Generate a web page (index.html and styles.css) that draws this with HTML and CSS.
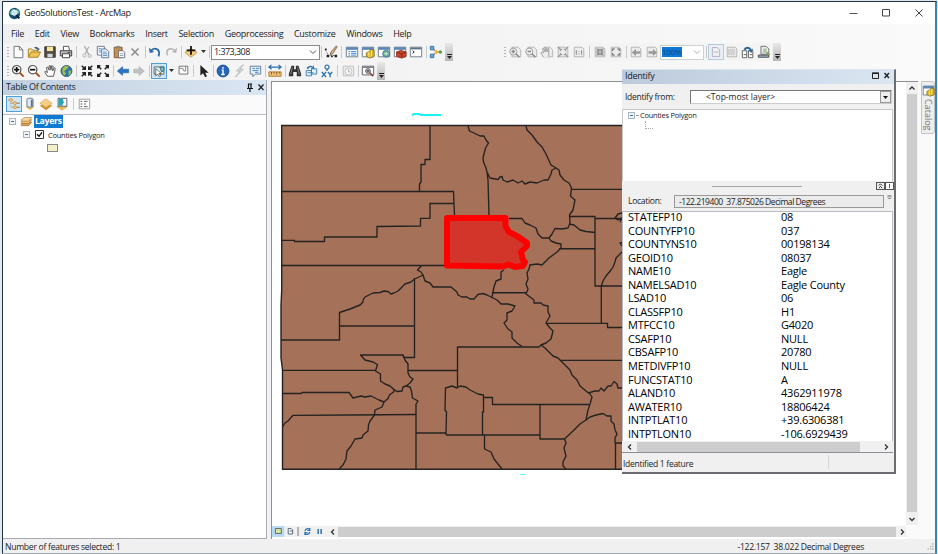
FILE: index.html
```html
<!DOCTYPE html>
<html lang="en">
<head>
<meta charset="utf-8">
<title>GeoSolutionsTest - ArcMap</title>
<link rel="stylesheet" href="styles.css">
</head>
<body>
<svg class="defs" width="0" height="0">
  <symbol id="zin" viewBox="0 0 16 16"><circle cx="6.5" cy="6.5" r="4.8" fill="#fff" stroke="#555" stroke-width="1.4"/><path d="M3.500 6.500h6M6.500 3.500v6" stroke="#111" stroke-width="2"/><path d="M10 10l4.500 4.500" stroke="#a0522d" stroke-width="2.200"/></symbol>
  <symbol id="zout" viewBox="0 0 16 16"><circle cx="6.500" cy="6.500" r="4.800" fill="#fff" stroke="#555" stroke-width="1.400"/><path d="M3.500 6.500h6" stroke="#111" stroke-width="2"/><path d="M10 10l4.500 4.500" stroke="#a0522d" stroke-width="2.200"/></symbol>
  <symbol id="hand" viewBox="0 0 16 16"><path d="M5 14L2 9l1-1 2 2-1-6 1.500-.5L7 7V2h1.500L9 7l1-5 1.500.5L11 8l2-4 1 1-2 9z" fill="#fff" stroke="#555" stroke-width="1.100"/></symbol>
  <symbol id="fin" viewBox="0 0 16 16"><path d="M2 2l4 4M6 2.500v3.500H2.500M14 2l-4 4M10 2.500v3.500h3.500M2 14l4-4M2.500 10h3.500v3.500M14 14l-4-4M13.500 10h-3.500v3.500" fill="none" stroke="#222" stroke-width="1.700"/></symbol>
  <symbol id="fout" viewBox="0 0 16 16"><path d="M6 6L2 2M2 5V2h3M10 6l4-4M11 2h3v3M6 10l-4 4M2 11v3h3M10 10l4 4M14 11v3h-3" fill="none" stroke="#222" stroke-width="1.700"/></symbol>
  <symbol id="pg" viewBox="0 0 16 16"><path d="M4.500 2.500h7l3 3v8h-10z" fill="#ececec" stroke="#b0b0b0"/></symbol>
  <symbol id="sheet" viewBox="0 0 16 16"><path d="M2.500 2.500h9l2 2v9h-11z" fill="#ececec" stroke="#b0b0b0"/></symbol>
  <symbol id="win" viewBox="0 0 16 16"><path d="M1.500 2.500h13v11h-13z" fill="#fff" stroke="#60717f"/><path d="M1.500 2.500h13v3h-13z" fill="#5b86b5"/></symbol>
  <symbol id="catalog" viewBox="0 0 16 16"><use href="#win"/><path d="M6 9l4-2 1-2 4 1v7l-5 2-4-2z" fill="#d9b320" stroke="#806410" stroke-width=".8"/><path d="M9 8v6M12 6v7" stroke="#fff3a0"/></symbol>
  <symbol id="stack" viewBox="0 0 16 16"><path d="M1 11l5-3h9l-4 5H1z" fill="#d79848" stroke="#9b6824" stroke-width=".7"/><path d="M1 8l5-3h9l-4 5H1z" fill="#efc079" stroke="#9b6824" stroke-width=".7"/><path d="M1 5l5-3h9l-4 5H1z" fill="#f6d79c" stroke="#9b6824" stroke-width=".7"/></symbol>
  <symbol id="dia" viewBox="0 0 16 16"><path d="M1 10l7-4 7 4-7 5z" fill="#d28f2c"/><path d="M1 7l7-5 7 5-7 5z" fill="#f4cf83" stroke="#d09a44" stroke-width=".6"/></symbol>
</svg>
<div class="window">
  <header class="titlebar">
    <svg class="app" viewBox="0 0 16 16"><circle cx="8" cy="8" r="7" fill="#174f73"/><path d="M2 6l4-4 3 1-1 4-3 3-3-1zM10 2l4 3v4l-3-2z" fill="#58b5a0"/><circle cx="8" cy="7" r="3.300" fill="#bfe8f2" stroke="#fff"/><path d="M10 10l4 4" stroke="#0e2538" stroke-width="2.500"/></svg>
    <span class="title">GeoSolutionsTest - ArcMap</span>
    <svg class="winbtns" viewBox="0 0 80 12"><path d="M1.500 6.500h8" stroke="#555"/><path d="M34.500 2.500h7v6.500h-7z" fill="none" stroke="#444"/><path d="M67.500 2.500l7 7M74.500 2.500l-7 7" stroke="#444"/></svg>
  </header>
  <nav class="menubar"><span>File</span><span>Edit</span><span>View</span><span>Bookmarks</span><span>Insert</span><span>Selection</span><span>Geoprocessing</span><span>Customize</span><span>Windows</span><span>Help</span></nav>

  <div class="toolrow">
    <div class="toolbar">
      <i class="grip"></i>
      <svg class="ic" viewBox="0 0 16 16"><path d="M3.500 1.500h6l4 4v9h-10z" fill="#fff" stroke="#667"/><path d="M9.500 1.500v4h4" fill="none" stroke="#667"/></svg>
      <svg class="ic" viewBox="0 0 16 16"><path d="M1.500 13.500v-9h4l1 1.500h6v3" fill="#f5dc8a" stroke="#a07a20"/><path d="M1.500 14l3-6h11l-3 6z" fill="#f0c552" stroke="#a07a20"/><path d="M8 3c2-2 4-1 5 1l1-1v3h-3l1-1" fill="#46627f"/></svg>
      <svg class="ic" viewBox="0 0 16 16"><path d="M2 2h12v12H2z" fill="#514c3d" stroke="#3a362b"/><path d="M4.500 2h7v5h-7z" fill="#f4e6a5"/><path d="M5 10h6v4H5z" fill="#d6d6d6"/></svg>
      <svg class="ic" viewBox="0 0 16 16"><path d="M5 6V1.500h6l1 4.500" fill="#fff" stroke="#444"/><path d="M1.500 6.500h13v6h-13z" fill="#b9b9b9" stroke="#333"/><path d="M4 10h8v4.500H4z" fill="#fff" stroke="#333"/><path d="M10 8.500h3" stroke="#333"/></svg>
      <i class="sep s5"></i>
      <svg class="ic" viewBox="0 0 16 16"><path d="M5 1l5 10M10 2L6 10" stroke="#aaa" stroke-width="1.300"/><circle cx="5" cy="12" r="1.800" fill="none" stroke="#aaa"/><circle cx="11" cy="12.500" r="1.800" fill="none" stroke="#aaa"/></svg>
      <svg class="ic" viewBox="0 0 16 16"><path d="M1.500 1.500h8v10h-8z" fill="#fff" stroke="#56718c"/><path d="M6.500 4.500h5l3 3v7h-8z" fill="#e9f2fb" stroke="#56718c"/><path d="M8 8h4M8 10h5M8 12h5M3 4h3M3 6h3M3 8h3" stroke="#5d8cbd"/></svg>
      <svg class="ic" viewBox="0 0 16 16"><path d="M2.500 2.500h9v12h-9z" fill="#c98f4b" stroke="#7a552a"/><path d="M5 1h4v3H5z" fill="#888"/><path d="M7.500 6.500h5l2 2v6h-7z" fill="#fff" stroke="#667"/><path d="M9 10h4M9 12h4" stroke="#89a"/></svg>
      <svg class="ic" viewBox="0 0 16 16"><path d="M4 4l8 8M12 4l-8 8" stroke="#8e8e8e" stroke-width="1.800"/></svg>
      <i class="sep s4"></i>
      <svg class="ic" viewBox="0 0 16 16"><path d="M3 7c4-5 12-3 9 6" fill="none" stroke="#2b6ca8" stroke-width="2"/><path d="M1 3l1 6 5-1z" fill="#2b6ca8"/></svg>
      <svg class="ic" viewBox="0 0 16 16"><path d="M13 7C9 2 1 4 4 12" fill="none" stroke="#b4b4b4" stroke-width="1.700"/><path d="M15 3l-1 6-5-1z" fill="#b4b4b4"/></svg>
      <i class="sep s4"></i>
      <svg class="ic" viewBox="0 0 16 16"><path d="M1 8.500L8 4l7 4.500L8 14z" fill="#f1cd80" stroke="#c39a4c"/><path d="M8 1v10M3 6h10" stroke="#111" stroke-width="2"/></svg>
      <i class="caret"></i><i class="sep s4"></i>
      <div class="combo scale"><span>1:373,308</span><svg viewBox="0 0 8 6"><path d="M1 1.500l3 3 3-3" fill="none" stroke="#555"/></svg></div>
      <i class="sep s3"></i>
      <svg class="ic" viewBox="0 0 16 16"><path d="M2 6l3 6h8" fill="none" stroke="#555" stroke-dasharray="1.500 1.500"/><path d="M14 1L8 8l-1 3 3-1 5-8z" fill="#e5b778" stroke="#543" stroke-width=".8"/><path d="M1 4h2v2H1zM3 11h3v3H3zM8 12h2v2H8zM12 11h3v3h-3z" fill="#222"/></svg>
      <i class="sep s5"></i>
      <svg class="ic" viewBox="0 0 16 16"><use href="#win"/><path d="M4 7.500h2M7 7.500h6M4 9.500h2M7 9.500h6M4 11.500h2M7 11.500h6" stroke="#2f78c4"/></svg>
      <svg class="ic" viewBox="0 0 16 16"><use href="#catalog"/></svg>
      <svg class="ic" viewBox="0 0 16 16"><use href="#win"/><circle cx="10.500" cy="10" r="4" fill="#65ac8f" stroke="#4679ae"/><path d="M8 10h5M10.500 8v4" stroke="#d7f5de"/></svg>
      <svg class="ic" viewBox="0 0 16 16"><use href="#win"/><path d="M4 8l5-2 6 2v5l-5 2-6-2z" fill="#c9442e" stroke="#812313" stroke-width=".8"/><path d="M4 8l6 2 5-2M10 10v4" fill="none" stroke="#812313"/></svg>
      <svg class="ic" viewBox="0 0 16 16"><path d="M1.500 2.500h13v11h-13z" fill="#fff" stroke="#60717f"/><path d="M2 3h12v2H2z" fill="#60717f"/><path d="M4 6.500l2 1.500-2 1.500" fill="none" stroke="#222"/></svg>
      <i class="sep s4"></i>
      <svg class="ic" viewBox="0 0 16 16"><path d="M4 3l4 5M4 13l4-5h5" fill="none" stroke="#555"/><path d="M1.500 1.500h4v4h-4zM1.500 10.500h4v4h-4z" fill="#65acd9" stroke="#2b6ca8"/><path d="M6 8l2.500-2.500L11 8l-2.500 2.500z" fill="#f0bd35"/><circle cx="13" cy="8" r="2" fill="#50a34e"/></svg>
      <i class="over"></i>
    </div>
    <div class="toolbar layout">
      <i class="grip"></i>
      <svg class="ic" viewBox="0 0 16 16"><use href="#pg"/><circle cx="6" cy="7.500" r="4" fill="#eee" stroke="#999"/><path d="M4 7.500h4M6 5.500v4M9 10l4 4" stroke="#888" stroke-width="1.700"/></svg>
      <svg class="ic" viewBox="0 0 16 16"><use href="#pg"/><circle cx="6" cy="7.500" r="4" fill="#eee" stroke="#999"/><path d="M4 7.500h4M9 10l4 4" stroke="#888" stroke-width="1.700"/></svg>
      <svg class="ic" viewBox="0 0 16 16"><use href="#pg"/><path d="M4 14L1 9l2-1 1 1-1-5h1l2 4V3h1l1 5 1-4h1v9" fill="#eee" stroke="#999"/></svg>
      <svg class="ic" viewBox="0 0 16 16"><use href="#sheet"/><path d="M5 7V5h2M9 5h2v2M5 9v2h2M9 11h2V9M2 2l3 3M14 2l-3 3M2 14l3-3M14 14l-3-3" fill="none" stroke="#999" stroke-width="1.300"/></svg>
      <svg class="ic" viewBox="0 0 16 16"><use href="#sheet"/><path d="M5 6v5M11 6v5M8 7v1M8 9.500v1" stroke="#999" stroke-width="1.400"/></svg>
      <i class="sep s5"></i>
      <svg class="ic" viewBox="0 0 16 16"><use href="#sheet"/><path d="M4 4l3 3M7 4v3H4M12 4L9 7M9 4v3h3M4 12l3-3M4 9h3v3M12 12L9 9M12 9H9v3" fill="none" stroke="#888" stroke-width="1.300"/></svg>
      <svg class="ic" viewBox="0 0 16 16"><use href="#sheet"/><path d="M4 7V4.500h2.500M9.500 4.500H12V7M4 9v2.500h2.500M9.500 11.500H12V9" fill="none" stroke="#888" stroke-width="1.700"/></svg>
      <i class="sep s4"></i>
      <svg class="ic" viewBox="0 0 16 16"><use href="#sheet"/><path d="M3 8.500l5-4v2.500h5v3H8v2.500z" fill="#999"/></svg>
      <svg class="ic" viewBox="0 0 16 16"><use href="#sheet"/><path d="M14 8.500l-5-4v2.500H4v3h5v2.500z" fill="#999"/></svg>
      <div class="combo pct"><span>100%</span><svg viewBox="0 0 8 6"><path d="M1 1.500l3 3 3-3" fill="none" stroke="#aaa"/></svg></div>
      <i class="sep s4"></i>
      <svg class="ic on soft" viewBox="0 0 16 16"><path d="M3.500 2.500h6l3 3v8h-9z" fill="#eef0f2" stroke="#aab"/><path d="M5 8h6" stroke="#aab"/></svg>
      <svg class="ic" viewBox="0 0 16 16"><use href="#sheet"/><path d="M4 5h7v6H4z" fill="#d5d5d5" stroke="#bbb" stroke-dasharray="1 1"/></svg>
      <svg class="ic" viewBox="0 0 16 16"><path d="M1.500 6.500h5v8h-5zM8.500 6.500h5v8h-5z" fill="#fff" stroke="#555"/><path d="M3 5c1-4 8-4 9 0l2-1-2 5-4-3h2c-1-2-4-2-5 0z" fill="#336f9d"/><path d="M3 11h3M10 11h3" stroke="#555"/></svg>
      <svg class="ic" viewBox="0 0 16 16"><path d="M4.500 1.500h6l3 3v6h-9z" fill="#e9efe7" stroke="#666"/><path d="M7 4h4v5H7z" fill="#b3c3a6"/><path d="M1.500 11.500h12v2.500h-12z" fill="#9fb3c6" stroke="#444"/><path d="M11 7l4 4-4 1z" fill="#789957"/></svg>
      <i class="over"></i>
    </div>
  </div>

  <div class="toolrow second">
    <div class="toolbar">
      <i class="grip"></i>
      <svg class="ic"><use href="#zin"/></svg>
      <svg class="ic"><use href="#zout"/></svg>
      <svg class="ic"><use href="#hand"/></svg>
      <svg class="ic" viewBox="0 0 16 16"><circle cx="8.500" cy="8" r="6.300" fill="#2d76ae" stroke="#36536b"/><path d="M4 5c2-3 5-3 7-2l-2 3-3 2 2 3-2 2c-2-2-3-4-2-8zM11 7l3 1-1 4-2 1z" fill="#9fc04b"/></svg>
      <i class="sep s5"></i>
      <svg class="ic"><use href="#fin"/></svg>
      <svg class="ic"><use href="#fout"/></svg>
      <i class="sep s4"></i>
      <svg class="ic" viewBox="0 0 16 16"><path d="M1.500 8l6-5v3h7v4h-7v3z" fill="#2c73c4" stroke="#2260a5" stroke-width=".7"/></svg>
      <svg class="ic" viewBox="0 0 16 16"><path d="M14 8L8 3v3H2v4h6v3z" fill="#c1c1c1" stroke="#aaa" stroke-width=".7"/></svg>
      <i class="sep s4"></i>
      <svg class="ic on" viewBox="0 0 16 16"><path d="M2 3h12v9H2z" fill="#d9f4f5" stroke="#555"/><path d="M9 3h5v5l-3 1z" fill="#5fc5d8" stroke="#456"/><path d="M4 5v9l2.500-2 2 3 1.500-1-2-3h3z" fill="#fff" stroke="#333" stroke-width=".8"/></svg>
      <i class="caret"></i>
      <svg class="ic" viewBox="0 0 16 16"><path d="M3.500 2.500h10v9h-10z" fill="#fff" stroke="#666"/><path d="M4 5h4l1 3h2V3" fill="none" stroke="#777"/></svg>
      <i class="sep s4"></i>
      <svg class="ic" viewBox="0 0 16 16"><path d="M5 1v12l3-2.500L10.500 15l2-1-2-4h4z" fill="#222"/></svg>
      <i class="sep s4"></i>
      <svg class="ic" viewBox="0 0 16 16"><circle cx="8" cy="8" r="6.800" fill="#2465b9" stroke="#184c8e"/><path d="M8 3.500v2M6.500 7H8v5M6 12h4" stroke="#fff" stroke-width="1.600" fill="none"/></svg>
      <svg class="ic" viewBox="0 0 16 16"><path d="M12 1L5 8h4l-5 7 9-9H9l4-5z" fill="#ddd" stroke="#aaa" stroke-width=".8"/></svg>
      <svg class="ic" viewBox="0 0 16 16"><path d="M2.500 2.500h12v9h-6l-3 3v-3h-3z" fill="#e6f2fb" stroke="#58738d"/><path d="M5 5h3M9 5h4M5 7.500h7M8 9.500h4" stroke="#347dbd"/></svg>
      <i class="sep s4"></i>
      <svg class="ic" viewBox="0 0 16 16"><path d="M1 3.500h14M4 1L1 3.500 4 6M12 1l3 2.500L12 6" stroke="#246ca9" stroke-width="1.300" fill="none"/><path d="M1 9h14v5H1z" fill="#efbf76" stroke="#a9762e"/><path d="M4 9v3M7 9v2M10 9v3M13 9v2" stroke="#875a1e"/></svg>
      <i class="sep s4"></i>
      <svg class="ic" viewBox="0 0 16 16"><path d="M4 2h3v4h2V2h3l3 9v3h-5V9H6v5H1v-3z" fill="#333"/><path d="M5 4l-2 8M11 4l2 8" stroke="#888"/></svg>
      <svg class="ic" viewBox="0 0 16 16"><path d="M2.500 7.500h6v6h-6zM8.500 5.500h6v6h-6z" fill="#e5f1fa" stroke="#3177ad"/><path d="M3 5c1-3 5-4 7-2l1-2 1 5-4-1 1-1C7 3 5 4 5 6z" fill="#3177ad"/><path d="M4 10h7" stroke="#3177ad"/></svg>
      <svg class="ic" viewBox="0 0 16 16"><circle cx="8" cy="3.500" r="2.300" fill="#fff" stroke="#3177ad" stroke-width="1.400"/><path d="M8 6v2M2 9l5 6M7 9l-5 6M9 9l2.500 3L14 9M11.500 12v3" stroke="#2470ae" stroke-width="1.500" fill="none"/></svg>
      <i class="sep s5"></i>
      <svg class="ic" viewBox="0 0 16 16"><path d="M2.500 2.500h12v11h-12z" fill="#eee" stroke="#bbb"/><circle cx="8.500" cy="8.500" r="4" fill="#f7f7f7" stroke="#bbb"/><path d="M8.500 6v3h2" fill="none" stroke="#aaa"/></svg>
      <i class="sep s4"></i>
      <svg class="ic" viewBox="0 0 16 16"><path d="M1.500 2.500h13v10h-13z" fill="#fff" stroke="#556"/><path d="M2 3h12v1.500H2z" fill="#778"/><circle cx="8" cy="8" r="2.700" fill="#ddd" stroke="#444"/><path d="M6.500 8h3M8 6.500v3" stroke="#333"/><path d="M10 10l4 4" stroke="#8b3a2a" stroke-width="1.700"/></svg>
      <i class="over"></i>
    </div>
  </div>

  <main class="work">
    <aside class="toc">
      <div class="toc-head"><span>Table Of Contents</span>
        <svg viewBox="0 0 20 9"><path d="M3 1h4M3.500 1v4M6 1v4M2 5.500h6M5 5.500V9" stroke="#111" stroke-width="1.200"/><path d="M13.500 1.500l5 5.500M18.500 1.500l-5 5.500" stroke="#222" stroke-width="1.300"/></svg></div>
      <div class="toc-tools">
        <svg class="ic on" viewBox="0 0 16 16"><path d="M4 5v7h4M4 7h4" fill="none" stroke="#888" stroke-dasharray="1 1"/><path d="M1 3l3-2 3 2-3 2zM6 7l3-2 3 2-3 2zM6 12l3-2 3 2-3 2z" fill="#f1c889" stroke="#c08e42"/><path d="M12 7h3M12 12h3" stroke="#555"/></svg>
        <svg class="ic" viewBox="0 0 16 16"><path d="M3 11l5 4 5-4-5-3z" fill="#efbd55"/><path d="M4.500 2.500c0-1.500 7-1.500 7 0v8c0 1.500-7 1.500-7 0z" fill="#dfe9f3" stroke="#59728e"/><path d="M10 3v8" stroke="#59728e" stroke-width="2"/></svg>
        <svg class="ic"><use href="#dia"/></svg>
        <svg class="ic" viewBox="0 0 16 16"><path d="M2 11l6-3 6 3-6 4z" fill="#efbd55" stroke="#c6943c" stroke-width=".6"/><path d="M3.500 1.500h10v9h-10z" fill="#fff" stroke="#556"/><path d="M4 2h5l1 4-2 4H4z" fill="#2aa4b8"/></svg>
        <i class="sep s4"></i>
        <svg class="ic" viewBox="0 0 16 16"><path d="M2.500 2.500h12v11h-12z" fill="#fafafa" stroke="#999"/><path d="M4 5h2M8 5h4M4 8h2M8 8h2M4 11h2M8 11h4" stroke="#555"/></svg>
      </div>
      <div class="toc-tree">
        <div class="node"><i class="exp"></i><svg class="lay"><use href="#stack"/></svg><b>Layers</b></div>
        <div class="node child"><i class="exp"></i><svg class="chk" viewBox="0 0 9 9"><path d="M.5.500h8v8h-8z" fill="#fff" stroke="#333"/><path d="M2 4.300l2 2 3-4" fill="none" stroke="#111" stroke-width="1.400"/></svg><span>Counties Polygon</span></div>
        <i class="patch"></i>
      </div>
    </aside>

    <section class="view">
      <div class="canvas">
        <svg class="map" viewBox="272 82 633 443">
          <path d="M412 115.500l2-1.500 5 0 2 1h20" fill="none" stroke="#19f1f5" stroke-width="2"/>
          <path d="M519.500 474.500h6" stroke="#6ff" stroke-width="1"/>
          <path class="land" d="M281.700 125.500H640V469.300H282.500V370L281 358V305L281.700 290z"/>
          <g class="lines">
            <path d="M430 125.500V159.500H425V164.500H421V182L419.500 184V191.500M281.700 191.500H453.500L454.500 216M281.700 240.300H294.500V241.500H324.500V237H377V226.500L420.500 226V218.300H430V203.500H454M281.700 265.500H446"/>
            <path d="M421.500 265.500L417.500 270 421 272 423 275 419 277 414.500 279 411 282 405 284 402 287 398 291 394 293 391 294 388 291.500 384 291 380 292.500 373 293 365 297 363 300 363 302 360 305 350 309 339.500 312.500V340H281M339.500 326H414.500M414.500 278V357.500H404L403 355H360.500L365 360 373 362 377.500 364.500 375.500 371 380.500 374V381L385 384 390 386 394 389.500 394 391.500 389.500 395 388 398.500 384 402 382 407 375 410 374.500 415 370 421 368.500 425 368 431 363 435 362 438 355 439 351 446 347 451 346 459 343 465 339 469"/>
            <path d="M423 275L425 281 430 283 433 287H451L457 292 458 295 462 297 467 297 470 299 474 299 478 294.500 483 293.500 487 295 491 297 497 300 501 304 508 304 515 306 512 311 507 313 507 320 504 323 508 329 512 332 512 338 517 343 522 346.500"/>
            <path d="M282.500 370.300H376M282.500 393.500H301L302 392.500H349L353 398 361 396 365 397 371 396 379 400 384 402M282.500 427L285 423 288 421 293 415.300 350 415 416 414.500"/>
            <path d="M403 355L405 360 408 364V373L410 377 413 379 410 383 406 386 403 387 402 391 397 391.500 393 389M406 386L410 387 411.500 391 412.500 398 418 401 416 404V469M408 370.500H457.500M416 433H446"/>
            <path d="M468 126L469.500 131 474 133 480 136 484 136 486 140 488.500 143 485.500 148 483 158 483.500 162 486 168 487 172 490 178 498 179.500 500 177 502 176.500 503 180 507 182 513 180 518 183 522 181 525 184 530 182 537 183 544 180 548 180 551 174 552 170 556 168 559 170 560 175 564 180 569 183 571.500 188 570.500 196 575 200 573 210 569.500 215 570 223 568 228 561 229 555 228.500 552 234 549 238M487 172L488 180 489 215"/>
            <path d="M526 126L527 130 532 135 537 142 542 147 546 154 551 165 556 168M571.500 189.300H640M569.500 216.500H595V286H640M595 218.500H640M569 224L574 225 580 230 586 231.500 595 232.500M559 248.700H595"/>
            <path d="M509 218.500H522L525 223 530 225 536 228 538 234 542 238 549 238 551 241 556 243 561 244 561 248 557 252 549 258 542 265 537 264 530 265 529 269 527 273 528 279 526 284 528 289 526 294 530 297 534 300 534 303 541 303 543 305 548 306 548 312 550 316 547 321 546 323 550 328 553 331 551 339 546 343 541 345 539 347H457.500V387M504 270L501 272 501 279 496 281 494 287 492 297M492 292.700H526"/>
            <path d="M541 345L545 348 553 356 558 358 561 361 566 366 570 370 572 375 577 380 580 386 586 391 590 394 592 397 590 404 588 410 586 420 580 424 573 431 564.500 439 566 443 564 448 566 456 563 462 563 466 566 469M560 360.300H640M588 393L595 391 599 391 601 388 604 391 608 386 611 386 614 381.500 617 384 618 388H640M546 323.300H607.500V327.500H640M601.300 286V323.300M601.300 286L603 281 606 276 611 270 613 267 615 262 616 258 620 254 624 250"/>
            <path d="M586 420L590 417 596 415 603 413.500 607 416 611 416 611 421 614 424 615 430 617 434 615 438 615 443H640M615.500 443V469M446 435L446.500 412 445 410 445.500 388 452 386 457 388 460 386 466 387 470 390 478 394 483.500 395V412H482.500V435M483.500 397.500H492.500V404.500H589M446 435H540M540 404.500V439H564.500M484.500 435V449L491 452 494 459 502 469M622 213l-4 1-3 4 3 2 4-2-2 4M624 242l-4 1 2 3"/>
          </g>
          <path class="picked" d="M447 218H505.500L505.500 226 509 232 517 236 527 243 527 246 521 252 523 260 525 262 523 266 515 267 508.500 264.500 503 266.500 447 265.500z"/>
        </svg>
        <div class="hbar">
          <svg class="viewbtns" viewBox="0 0 58 11"><path d="M0 0h12.500v11H0z" fill="#b5d9f3"/><path d="M3.500 2.500h6v5h-6z" fill="#d6e9a0" stroke="#666"/><path d="M16.500 2.500h3l1.500 1.500v4h-4.500zM18 5h2.500" fill="#fff" stroke="#567"/><path d="M26.500 1v9" stroke="#777"/><path d="M33.500 5c1-3 4-3 5-1M38.500 2v2.500H36M38.500 6c-1 3-4 3-5 1M33.500 9V6.500H36" fill="none" stroke="#286fb1" stroke-width="1.200"/><path d="M47 3v5M50 3v5" stroke="#286fb1" stroke-width="1.500"/></svg>
          <svg class="arr" viewBox="0 0 8 8"><path d="M5 1.500L2.500 4l2.500 2.500" fill="none" stroke="#333" stroke-width="1.300"/></svg>
          <i class="thumb"></i>
          <svg class="arr" viewBox="0 0 8 8"><path d="M3 1.500L5.500 4 3 6.500" fill="none" stroke="#333" stroke-width="1.300"/></svg>
        </div>
      </div>
      <div class="vbar">
        <svg class="arr" viewBox="0 0 8 8"><path d="M1.500 5.500L4 3l2.500 2.500" fill="none" stroke="#333" stroke-width="1.300"/></svg>
        <i class="thumb"></i>
        <svg class="arr" viewBox="0 0 8 8"><path d="M1.500 3L4 5.500 6.500 3" fill="none" stroke="#333" stroke-width="1.300"/></svg>
      </div>
    </section>
    <div class="dock"><div class="tab"><svg><use href="#catalog"/></svg><span>Catalog</span></div></div>
  </main>

  <footer class="status"><span class="sel">Number of features selected: 1</span><span class="coord">-122.157&nbsp; 38.022 Decimal Degrees</span>
    <svg viewBox="0 0 8 8"><path d="M6 1h1.500M4 3.500h1.500M6 3.500h1.500M1.500 6h1.500M4 6h1.500M6 6h1.500" stroke="#bbb" stroke-width="1.500"/></svg></footer>

  <section class="identify">
    <div class="id-head"><span>Identify</span><svg viewBox="0 0 24 10"><path d="M2.500 2h6v5.500h-6z" fill="none" stroke="#222"/><path d="M2 2.300h7" stroke="#222" stroke-width="1.400"/><path d="M14.500 2l4.500 5M19 2l-4.500 5" stroke="#222" stroke-width="1.400"/></svg></div>
    <div class="id-from"><label>Identify from:</label><div class="select"><span>&lt;Top-most layer&gt;</span><i class="drop"></i></div></div>
    <div class="id-tree"><div class="node"><i class="exp"></i><i class="dash"></i><span>Counties Polygon</span></div><i class="branch"></i></div>
    <div class="split"><i class="bar"></i><i class="mini"><svg viewBox="0 0 7 7"><path d="M1.500 3l2-2 2 2M1.500 6l2-2 2 2" fill="none" stroke="#111"/></svg></i><i class="mini lite"><svg viewBox="0 0 7 7"><path d="M3.500 1v5" stroke="#444"/></svg></i></div>
    <div class="id-loc"><label>Location:</label><div class="field">-122.219400&nbsp; 37.875026 Decimal Degrees</div><svg viewBox="0 0 5 5"><path d="M.5 1h4M1 2.500l1.500 1.500L4 2.500" fill="none" stroke="#555"/></svg></div>
    <dl class="attrs">
      <dt>STATEFP10</dt><dd>08</dd><dt>COUNTYFP10</dt><dd>037</dd><dt>COUNTYNS10</dt><dd>00198134</dd><dt>GEOID10</dt><dd>08037</dd><dt>NAME10</dt><dd>Eagle</dd><dt>NAMELSAD10</dt><dd>Eagle County</dd><dt>LSAD10</dt><dd>06</dd><dt>CLASSFP10</dt><dd>H1</dd><dt>MTFCC10</dt><dd>G4020</dd><dt>CSAFP10</dt><dd>NULL</dd><dt>CBSAFP10</dt><dd>20780</dd><dt>METDIVFP10</dt><dd>NULL</dd><dt>FUNCSTAT10</dt><dd>A</dd><dt>ALAND10</dt><dd>4362911978</dd><dt>AWATER10</dt><dd>18806424</dd><dt>INTPTLAT10</dt><dd>+39.6306381</dd><dt>INTPTLON10</dt><dd>-106.6929439</dd>
    </dl>
    <div class="id-scroll"><svg class="arr" viewBox="0 0 8 8"><path d="M5 1.500L2.500 4 5 6.500" fill="none" stroke="#333" stroke-width="1.300"/></svg><i class="thumb"></i><svg class="arr" viewBox="0 0 8 8"><path d="M3 1.500L5.500 4 3 6.500" fill="none" stroke="#333" stroke-width="1.300"/></svg></div>
    <div class="id-status"><span>Identified 1 feature</span></div>
  </section>
</div>
</body>
</html>
```
FILE: styles.css
```css
* { box-sizing: border-box; }
html, body { margin: 0; height: 100%; overflow: hidden; }
body { background: #e4e8eb; color: #222; font: 9px/12px "Open Sans", "Noto Sans", sans-serif; letter-spacing: -.28px; padding: 1px 1px 0 2px; }
.defs { position: absolute; }
svg, i { display: block; flex: none; }
span, label { white-space: nowrap; }
.window { position: relative; height: 553px; width: 935px; border: solid #1c3447; border-width: 1px 2px 1px 1px; border-right-color: #3d82b4; border-bottom-color: #a6abb0; background: linear-gradient(90deg, #f0f0f0, #f4f4f4 50%, #fafafa); display: flex; flex-direction: column; }

.titlebar { height: 22px; background: #fff; display: flex; align-items: center; padding: 0 7px 0 5px; }
.app { width: 13px; height: 13px; margin-right: 3px; }
.title { letter-spacing: -.35px; font-size: 9.200px; }
.winbtns { width: 80px; height: 12px; margin-left: auto; }
.menubar { height: 19px; display: flex; align-items: center; padding-left: 8px; gap: 10.700px; }

.toolrow { display: flex; height: 18px; gap: 47px; }
.second { margin: 1px 0 0; }
.toolbar { display: flex; align-items: center; height: 18px; background: #f4f4f4; }
.ic { width: 16px; height: 16px; padding: 1px; }
.ic.on { background: #cfe6f7; border: 1px solid #4f9fdc; padding: .5px; }
.ic.soft { background: #e9eff4; border-color: #b9cbd9; }
.grip { width: 2px; height: 11px; margin: 0 1px 0 4px; background: repeating-linear-gradient(#b5b5b5 0 1px, transparent 1px 3px); }
.sep { height: 12px; background: linear-gradient(#c9c9c9, #c9c9c9) center / 1px 100% no-repeat; }
.s3 { width: 3px; } .s4 { width: 4px; } .s5 { width: 5px; }
.caret { width: 8px; height: 4px; background: #333; clip-path: polygon(2px 0, 7px 0, 4.500px 3px); }
.over { width: 8px; height: 18px; margin-left: 1px; background: linear-gradient(#e8e8e8, #b5b5b5); display: flex; }
.over::after { content: ""; width: 5px; height: 5px; margin: 11px 0 0 2px; background: linear-gradient(#222 0 1px, transparent 1px 2px, #222 2px); clip-path: polygon(0 0, 5px 0, 5px 2px, 2.500px 5px, 0 2px); }
.combo { display: flex; align-items: center; justify-content: space-between; height: 15px; background: #fff; border: 1px solid #8a8a8a; padding: 0 2px; color: #222; }
.combo svg { width: 8px; height: 6px; }
.scale { width: 109px; }
.scale span { letter-spacing: -.55px; }
.pct { width: 44px; border-color: #d0d0d0; padding: 0 2px 0 1px; }
.pct span { background: #0f78d6; color: #114a80; width: 20px; line-height: 10px; font-size: 8px; letter-spacing: -.3px; }

.work { flex: none; height: 459px; display: flex; }
.toc { width: 264px; display: flex; flex-direction: column; border-right: 1px solid #a9aab4; border-bottom: 1px solid #a9aab4; }
.toc-head { height: 15px; background: linear-gradient(90deg, #c0d0e0, #dbe6f3); display: flex; align-items: center; justify-content: space-between; padding: 0 1px 1px 3px; letter-spacing: -.35px; }
.toc-head span { font-size: 9px; }
.toc-head svg { width: 20px; height: 9px; }
.toc-tools { height: 19px; display: flex; align-items: center; padding: 0 0 1px 3px; background: #fafafa; }
.toc-tools .sep { margin: 0 1px; }
.toc-tree { flex: 1; background: #fff; border-top: 1px solid #b9bcc4; padding: 0 0 0 6px; }
.node { display: flex; align-items: center; height: 13px; font-size: 7.500px; letter-spacing: -.25px; }
.exp { width: 7px; height: 7px; border: 1px solid #a9b4c2; background: linear-gradient(#4e70a0, #4e70a0) center / 3px 1px no-repeat #f1f4f8; }
.lay { width: 13px; height: 12px; margin: 0 1px 0 4px; }
.node b { background: #1079d2; color: #fff; font-size: 8.800px; line-height: 13px; padding: 0 1px; letter-spacing: -.35px; }
.child { padding-left: 14px; }
.chk { width: 9px; height: 9px; margin: 0 4px 0 5px; }
.patch { width: 11px; height: 8px; margin: 3px 0 0 38px; background: #f3efc8; border: 1px solid #888; }

.view { display: flex; width: 651px; margin-left: 4px; padding-top: 1px; }
.canvas { width: 635px; border: 1px solid #8d8f90; border-width: 1px 0 0 1px; background: #fff; display: flex; flex-direction: column; }
.map { width: 633px; height: 443px; }
.land { fill: #a57158; stroke: #252321; stroke-width: 1.400; }
.lines { fill: none; stroke: #252321; stroke-width: 1.350; stroke-linejoin: round; }
.picked { fill: #d2362a; stroke: #f00; stroke-width: 6; stroke-linejoin: round; }
.hbar { display: flex; height: 11px; align-items: center; background: #f0f0f0; margin-top: 1px; }
.viewbtns { width: 57px; height: 11px; }
.arr { width: 8px; height: 8px; }
.hbar .thumb { flex: 1; height: 10px; background: #cdcdcd; margin: 0 2px 0 1px; }
.vbar { width: 12px; height: 444px; margin-left: 0; border-top: 1px solid #8d8f90; background: #f0f0f0; display: flex; flex-direction: column; align-items: center; padding: 2px 0 2px; }
.vbar .thumb { flex: 1; width: 10px; background: #cdcdcd; margin: 2px 0 3px; }
.dock { padding-top: 1px; }
.tab { width: 14px; height: 53px; border: 1px solid #c3c3c3; border-radius: 0 3px 3px 0; background: #eee; display: flex; flex-direction: column; align-items: center; padding-top: 2px; gap: 2px; color: #777; }
.tab svg { width: 13px; height: 13px; }
.tab span { writing-mode: vertical-rl; letter-spacing: 0; line-height: 12px; }

.status { flex: 1; display: flex; align-items: center; background: #f0f0f0; padding: 2px 1px 0 2px; font-size: 8.600px; }
.coord { margin-left: auto; }
.status svg { width: 8px; height: 8px; margin-left: 62px; }

.identify { position: absolute; left: 619px; top: 67px; width: 274px; height: 405px; background: #f0f0f0; border: solid #6c6d70; border-width: 1px 2px 2px 0; border-top-color: #dce4ec; font-size: 8.500px; display: flex; flex-direction: column; }
.id-head { height: 14px; background: linear-gradient(90deg, #bccadb, #dbe6f2); display: flex; align-items: center; justify-content: space-between; padding: 0 0 2px 3px; font-size: 9px; }
.id-head svg { width: 24px; height: 10px; }
.id-from { height: 25px; display: flex; align-items: center; padding: 1px 2px 0 3px; }
.id-from label { width: 65px; padding-bottom: 1px; }
.select { flex: 1; height: 14px; background: #fff; border: 1px solid #777; border-right-color: #ccc; border-bottom-color: #ccc; display: flex; align-items: center; padding-left: 15px; letter-spacing: 0; }
.drop { width: 11px; height: 12px; margin-left: auto; border: 1px solid #999; background: #eee; display: flex; }
.drop::after { content: ""; width: 5px; height: 3px; margin: 4px 2px; background: #111; clip-path: polygon(0 0, 100% 0, 50% 100%); }
.id-tree { height: 72px; background: #fff; border: 1px solid #c9c9c9; border-bottom: 0; margin-right: 1px; padding-left: 5px; }
.id-tree .node { height: 10px; }
.dash { width: 3px; height: 1px; background: #999; margin: 0 1px 0 1px; }
.branch { width: 8px; height: 8px; margin: 1px 0 0 17px; border: dotted #aaa; border-width: 0 0 1px 1px; }
.split { height: 10px; display: flex; align-items: center; padding-left: 90px; }
.bar { width: 90px; height: 1px; background: #a6a6a6; margin-right: 74px; }
.mini { width: 9px; height: 8px; border: 1px solid #555; }
.mini svg { width: 7px; height: 6px; }
.lite { background: #fff; }
.id-loc { height: 20px; display: flex; align-items: center; padding: 0 0 0 6px; }
.id-loc label { width: 46px; }
.field { width: 210px; height: 13px; line-height: 11px; border: 1px solid #999; background: #ebebeb; padding-left: 4px; white-space: nowrap; letter-spacing: -.45px; }
.id-loc svg { width: 5px; height: 5px; margin: -7px 0 0 3px; }
.attrs { margin: 0 1px 0 0; height: 230px; background: #fff; border: 1px solid #b9bcc4; border-bottom: 0; padding-left: 5px; display: grid; grid-template-columns: 153px 1fr; grid-auto-rows: 13.560px; align-content: start; font-size: 11px; line-height: 12px; letter-spacing: -.22px; color: #000; }
.attrs dt, .attrs dd { margin: -1px 0 0; white-space: nowrap; }
.id-scroll { height: 12px; display: flex; align-items: center; padding: 0 3px 0 4px; border-bottom: 1px solid #8a8d93; margin-right: 1px; }
.id-scroll .thumb { width: 223px; height: 10px; background: #cdcdcd; margin: 0 auto 0 3px; }
.id-status { flex: 1; display: flex; align-items: center; padding: 2px 0 0 1px; background: linear-gradient(#d5d5d5, #d5d5d5) 206px 2px / 1px 14px no-repeat; }
```
